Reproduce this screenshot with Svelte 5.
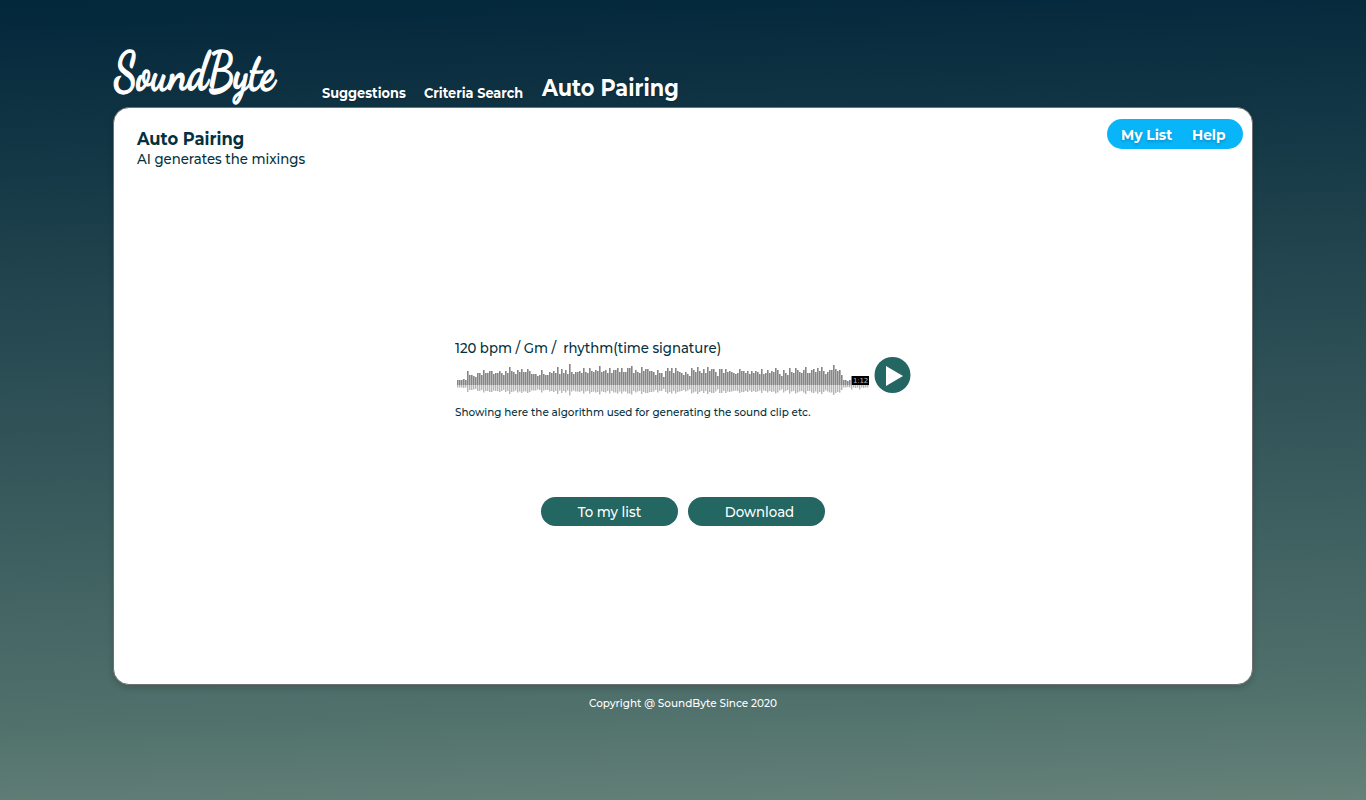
<script>
  // Peak heights in pixels, one for every 2px step of the waveform.
  const bars = [
    5,5,5,6,5,14,10,10,9,8,12,12,10,15,12,12,14,14,11,12,12,14,12,10,14,12,
    18,14,13,11,15,13,16,13,13,16,14,11,11,11,9,10,15,11,10,10,13,12,14,12,
    18,11,16,12,15,11,21,13,11,13,13,14,12,17,13,12,17,14,13,15,14,19,
    13,14,15,12,17,12,15,15,17,13,17,13,13,17,17,19,12,15,13,12,18,14,16,16,14,14,
    13,10,15,12,12,8,14,17,14,17,12,17,14,13,12,10,13,11,9,17,15,13,18,14,
    12,16,12,18,14,16,16,13,9,16,16,12,16,13,14,13,12,11,12,16,14,14,12,
    14,11,14,12,14,13,11,16,11,12,15,12,14,13,17,15,11,9,15,12,10,17,13,12,
    17,15,13,12,15,18,12,12,15,16,13,17,14,18,14,11,13,15,15,20,16,14,15,10,
    5,5,4,5,9,5,6,5,9,5,6,5,5,5
  ].slice(0, 206);
</script>

<div class="page">
  <div class="shell">
    <header>
      <svg class="logo" width="170" height="68" viewBox="0 0 170 68" role="img" aria-label="SoundByte">
        <text x="1" y="49" textLength="161" lengthAdjust="spacingAndGlyphs">SoundByte</text>
      </svg>
      <nav>
        <a class="sug"><span>Suggestions</span></a>
        <a class="crit"><span>Criteria Search</span></a>
        <a class="active"><span>Auto Pairing</span></a>
      </nav>
    </header>

    <main>
      <div class="top">
        <div class="intro">
          <h1>Auto Pairing</h1>
          <p class="sub">AI generates the mixings</p>
        </div>
        <div class="pill"><a class="list"><span>My List</span></a><a class="help"><span>Help</span></a></div>
      </div>

      <section>
        <p class="meta">120 bpm / Gm /&nbsp; rhythm(time signature)</p>
        <div class="player">
          <div class="wave">
            <svg width="412" height="36" viewBox="0 0 412 36">
              {#each bars as h, i}
                <rect x={i * 2} y={23 - h} width="1.6" height={h} fill="#858585" />
                <rect x={i * 2} y="23" width="1.4" height={h * 0.5} fill="#b5b5b5" />
              {/each}
            </svg>
            <span class="time">1:12</span>
          </div>
          <svg class="play" width="37" height="37" viewBox="0 0 37 37">
            <circle cx="18.5" cy="18" r="18" fill="#246662" />
            <path d="M12 9 29 19 12 29Z" fill="#fff" />
          </svg>
        </div>
        <p class="note">Showing here the algorithm used for generating the sound clip etc.</p>
      </section>

      <div class="actions">
        <button class="add"><span>To my list</span></button>
        <button class="down"><span>Download</span></button>
      </div>
    </main>

    <footer><span>Copyright @ SoundByte Since 2020</span></footer>
  </div>
</div>

<style>
  :global(body) { margin: 0; }
  .page {
    height: 800px;
    overflow: hidden;
    background: linear-gradient(178.5deg, #03273b 0%, #4f706b 86%, #668279 100%);
    font-family: Montserrat, Inter, sans-serif;
    font-weight: 500;
    color: #033140;
  }
  .shell { width: 1140px; margin: 0 auto; }
  p, h1 { margin: 0; white-space: nowrap; width: max-content; transform-origin: left; }
  nav span, .pill span, button span, footer span { display: inline-block; transform-origin: left; }
  header { height: 107px; display: flex; align-items: flex-end; box-sizing: border-box; }
  .logo { display: block; margin-bottom: -1px; overflow: visible; flex: none; }
  .logo text { fill: #fff; stroke: #fff; stroke-width: 1.3px; font-family: "Dancing Script", cursive; font-size: 54px; font-weight: 700; }
  nav { display: flex; align-items: flex-end; color: #fff; font-weight: 700; margin-left: 39px; padding-bottom: 4px; white-space: nowrap; text-shadow: 0 1px 2px #0004; }
  nav a { font-size: 14px; line-height: 20px; }
  nav .sug { width: 102px; }
  nav .crit { width: 118px; }
  nav a span { transform: scaleX(.92); }
  nav .active { font-size: 23px; line-height: 30px; }
  nav .active span { transform: scaleX(.907); }
  main {
    height: 578px;
    box-sizing: border-box;
    background: #fff;
    border: 1px solid #707070;
    border-radius: 16px;
    box-shadow: 0 3px 6px #00000029;
  }
  .top { display: flex; justify-content: space-between; height: 231px; padding: 11px 9px 0 23px; box-sizing: border-box; }
  h1 { font-size: 17.5px; line-height: 22px; padding-top: 9px; transform: scaleX(.934); }
  .sub { font-size: 14px; line-height: 18px; transform: scaleX(.948); }
  .pill { width: 136px; height: 30px; border-radius: 15px; background: #09b5f9; color: #fff; font-size: 15px; font-weight: 700; display: flex; line-height: 31px; box-sizing: border-box; padding-left: 14px; text-shadow: 0 2px 3px #0003; }
  .pill span { transform: scaleX(.92); }
  .pill .list { width: 71px; }
  section { width: 456px; margin-left: 341px; }
  .meta { font-size: 14px; line-height: 18px; transform: scaleX(.945); }
  .player { display: flex; height: 45px; }
  .wave { position: relative; width: 412px; height: 36px; margin: 5px 5px 0 2px; }
  .wave svg { display: block; }
  .time { position: absolute; left: 395px; top: 14px; width: 17px; height: 9px; background: #000; color: #bbb; font: 7px/10px "DejaVu Sans", sans-serif; text-align: center; letter-spacing: -.2px; }
  .play { flex: none; }
  .note { font-size: 11px; line-height: 20px; transform: scaleX(.945); }
  .actions { display: flex; justify-content: center; gap: 10px; margin-top: 75px; }
  button { width: 137px; height: 29px; padding: 1px 0 0; border: 0; border-radius: 15px; background: #246662; color: #fff; font: 500 14px/29px Montserrat, Inter, sans-serif; }
  button span, footer span { transform: scaleX(.95); transform-origin: center; }
  .down { padding-left: 7px; }
  footer { color: #fff; font-size: 11px; line-height: 16px; text-align: center; padding-top: 10px; }
</style>
